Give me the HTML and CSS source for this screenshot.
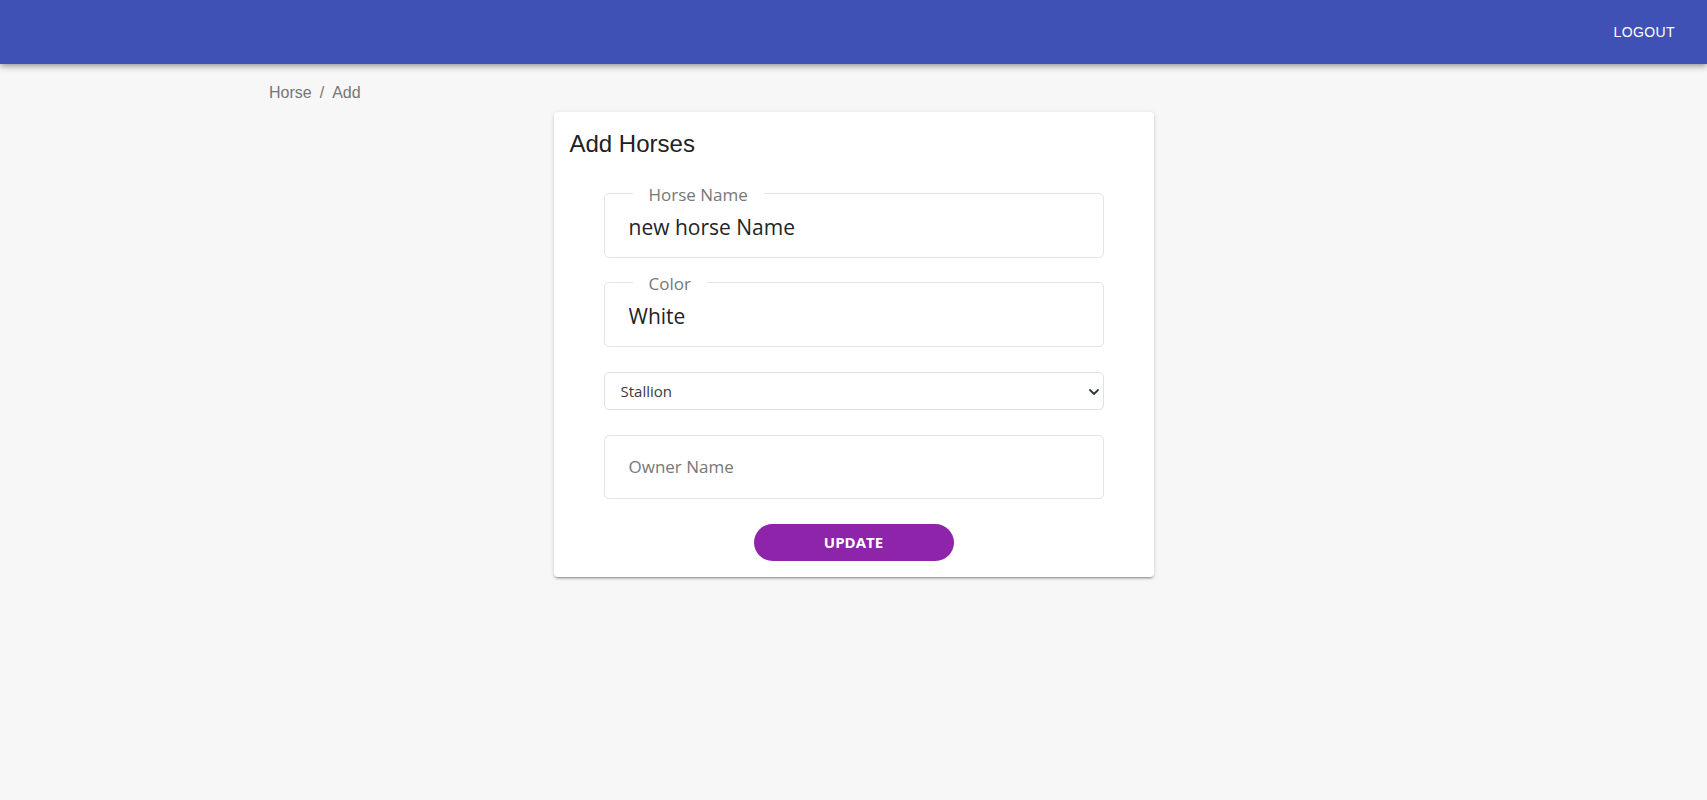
FILE: index.html
```html
<!DOCTYPE html>
<html lang="en">
<head>
<meta charset="utf-8">
<title>Add Horses</title>
<link rel="stylesheet" href="styles.css">
</head>
<body>
<header class="appbar">
  <div class="toolbar">
    <button class="logout" type="button">LOGOUT</button>
  </div>
</header>
<main class="container">
  <nav class="breadcrumb">
    <span class="crumb">Horse</span>
    <span class="sep">/</span>
    <span class="crumb">Add</span>
  </nav>
  <section class="card">
    <h5 class="card-title">Add Horses</h5>
    <form class="horse-form">
      <fieldset class="field">
        <legend class="field-label">Horse Name</legend>
        <input class="field-input" type="text" value="new horse Name">
      </fieldset>
      <fieldset class="field">
        <legend class="field-label">Color</legend>
        <input class="field-input" type="text" value="White">
      </fieldset>
      <div class="select-wrap">
        <select class="select">
          <option>Stallion</option>
          <option>Mare</option>
          <option>Gelding</option>
        </select>
        <svg class="chevron" width="10" height="6" viewBox="0 0 10 6" aria-hidden="true">
          <path d="M1 1l4 4 4-4" fill="none" stroke="#343a40" stroke-width="1.8" stroke-linecap="round" stroke-linejoin="round"/>
        </svg>
      </div>
      <input class="plain-input" type="text" placeholder="Owner Name">
      <button class="update-btn" type="button">UPDATE</button>
    </form>
  </section>
</main>
</body>
</html>
```

FILE: styles.css
```css
* {
  box-sizing: border-box;
}

html, body {
  margin: 0;
  padding: 0;
}

body {
  background: #f7f7f7;
  font-family: "Liberation Sans", Arial, sans-serif;
  color: rgba(0, 0, 0, 0.87);
  min-height: 800px;
}

.appbar {
  height: 64px;
  background: #3f51b5;
  box-shadow: 0 2px 4px -1px rgba(0, 0, 0, 0.2), 0 4px 5px 0 rgba(0, 0, 0, 0.14), 0 1px 10px 0 rgba(0, 0, 0, 0.12);
  position: relative;
  z-index: 2;
}

.toolbar {
  height: 64px;
  display: flex;
  align-items: center;
  justify-content: flex-end;
  padding: 0 24px;
}

.logout {
  background: transparent;
  border: 0;
  color: #fff;
  font-family: "Liberation Sans", Arial, sans-serif;
  font-size: 14px;
  font-weight: 400;
  letter-spacing: 0.4px;
  line-height: 24px;
  padding: 6px 8px;
  cursor: pointer;
}

.container {
  width: 1169px;
  margin: 0 auto;
  padding-top: 17px;
}

.breadcrumb {
  display: flex;
  align-items: center;
  font-size: 16px;
  line-height: 24px;
  color: #757575;
}

.sep {
  margin: 0 8px;
}

.card {
  width: 600px;
  margin: 7px auto 0;
  background: #fff;
  border-radius: 4px;
  padding: 16px;
  box-shadow: 0 3px 1px -2px rgba(0, 0, 0, 0.2), 0 2px 2px 0 rgba(0, 0, 0, 0.14), 0 1px 5px 0 rgba(0, 0, 0, 0.12);
}

.card-title {
  margin: 0;
  font-family: "Liberation Sans", Arial, sans-serif;
  font-size: 24px;
  font-weight: 400;
  line-height: 32px;
  color: #212121;
}

.horse-form {
  width: 500px;
  margin: 24px auto 0;
  display: flex;
  flex-direction: column;
  gap: 25px;
}

.field {
  margin: 0;
  padding: 0 24px 6px;
  border: 1px solid #e4e4e4;
  border-radius: 5px;
  min-width: 0;
}

.field + .field {
  margin-top: -10.5px;
}

.field-label {
  float: none;
  width: auto;
  margin-left: 4px;
  padding: 3px 16px 0;
  font-family: "Open Sans", "Noto Sans", sans-serif;
  font-size: 17px;
  line-height: 16px;
  color: #777;
}

.field-input {
  display: block;
  width: 100%;
  height: 48px;
  border: 0;
  padding: 0;
  margin: 0;
  outline: none;
  background: transparent;
  font-family: "Open Sans", "Noto Sans", sans-serif;
  font-size: 21px;
  color: #212529;
}

.select-wrap {
  position: relative;
}

.select {
  display: block;
  width: 100%;
  height: 38px;
  padding: 0 36px 0 16px;
  border: 1px solid #dee2e6;
  border-radius: 5px;
  background: #fff;
  appearance: none;
  -webkit-appearance: none;
  font-family: "Open Sans", "Noto Sans", sans-serif;
  font-size: 15px;
  color: #3a3a3a;
  outline: none;
}

.chevron {
  position: absolute;
  right: 5px;
  top: 17px;
  pointer-events: none;
}

.plain-input {
  display: block;
  width: 100%;
  height: 64px;
  padding: 0 24px;
  border: 1px solid #e4e4e4;
  border-radius: 5px;
  outline: none;
  font-family: "Open Sans", "Noto Sans", sans-serif;
  font-size: 17px;
  color: #212529;
  background: #fff;
}

.plain-input::placeholder {
  color: #777;
}

.update-btn {
  align-self: center;
  width: 200px;
  height: 37px;
  border: 0;
  border-radius: 19px;
  background: #8e24aa;
  color: #fff;
  font-family: "Open Sans", "Noto Sans", sans-serif;
  font-size: 15px;
  font-weight: 700;
  cursor: pointer;
}
```
